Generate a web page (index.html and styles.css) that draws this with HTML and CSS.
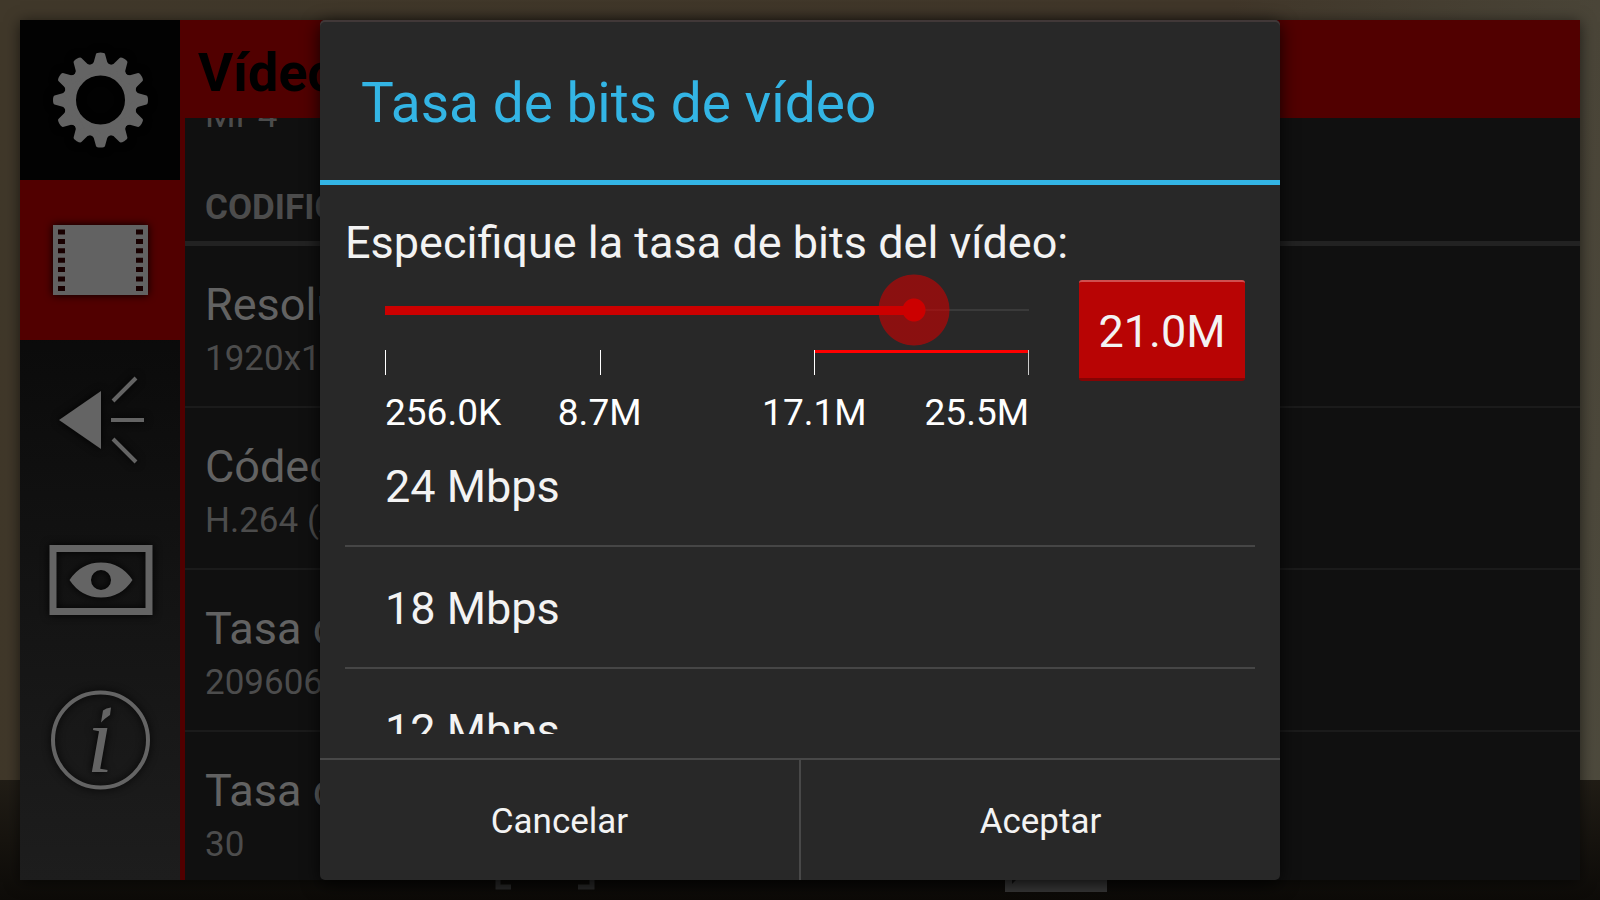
FILE: index.html
```html
<!DOCTYPE html>
<html lang="es">
<head>
  <meta charset="UTF-8">
  <meta name="viewport" content="width=device-width, initial-scale=1">
  <title>Tasa de bits de vídeo</title>
  <link rel="stylesheet" href="styles.css">
</head>
<body>
  <!-- camera controls, mostly hidden by the settings window -->
  <svg class="cam-icon focus" viewBox="0 0 100 40" aria-hidden="true">
    <path d="M3 0V37H16M97 0V37H83" fill="none" stroke="#2a2a2a" stroke-width="5"/>
  </svg>
  <svg class="cam-icon gallery" viewBox="0 0 102 40" aria-hidden="true">
    <rect width="102" height="40" fill="#383838"/>
    <path d="M7 32V28H11Z" fill="#111"/>
  </svg>

  <div class="settings">
    <nav class="tabs">
      <a href="#" class="tab general" aria-label="General">
        <svg viewBox="0 0 160 160">
          <defs>
            <path id="tooth" d="M64 52L67 44Q72 46 73.500 43L76 34Q76.500 32.500 80.500 32.500T85 34L87.500 43Q89 46 94 44L97 52Z"/>
          </defs>
          <circle cx="80.500" cy="80" r="30" fill="none" stroke="#646464" stroke-width="11"/>
          <g id="teeth" fill="#646464"></g>
        </svg>
      </a>
      <a href="#" class="tab video active" aria-label="Vídeo">
        <svg viewBox="0 0 160 160">
          <rect x="33" y="45" width="95" height="70" fill="#626262"/>
          <path d="M41.500 49.500V112M119.500 49.500V112" stroke="#180000" stroke-width="7" stroke-dasharray="5 4.400"/>
        </svg>
      </a>
      <a href="#" class="tab audio" aria-label="Audio">
        <svg viewBox="0 0 160 160">
          <path d="M39 80L81 51V109Z" fill="#646464"/>
          <path d="M93 61L116 38M91 80H124M93 99L116 122" stroke="#646464" stroke-width="4"/>
        </svg>
      </a>
      <a href="#" class="tab preview" aria-label="Vista previa">
        <svg viewBox="0 0 160 160">
          <rect x="33" y="48.500" width="96" height="63" fill="none" stroke="#646464" stroke-width="7"/>
          <path fill-rule="evenodd" fill="#646464" d="M49.500 80Q61 62.500 81 62.500T112.500 80Q101 97.500 81 97.500T49.500 80ZM71 80a10 10 0 1 0 20 0a10 10 0 1 0 -20 0Z"/>
        </svg>
      </a>
      <a href="#" class="tab info" aria-label="Información">
        <svg viewBox="0 0 160 160">
          <circle cx="80.500" cy="80" r="47.500" fill="none" stroke="#646464" stroke-width="4"/>
          <text x="80" y="112" class="info-letter">ı</text>
          <path d="M91 47.500L90 55Q84 59 81 62.500L83 50.500Q86 48 91 47.500Z" fill="#646464"/>
        </svg>
      </a>
    </nav>

    <main class="panel">
      <header class="panel-header">
        <h1>Vídeo</h1>
      </header>
      <div class="panel-body">
        <ul class="prefs">
          <li class="pref">
            <span class="pref-title">Contenedor</span>
            <span class="pref-value">MP4</span>
          </li>
          <li class="section">CODIFICACIÓN</li>
          <li class="pref">
            <span class="pref-title">Resolución</span>
            <span class="pref-value">1920x1080</span>
          </li>
          <li class="pref">
            <span class="pref-title">Códec de vídeo</span>
            <span class="pref-value">H.264 (AVC)</span>
          </li>
          <li class="pref">
            <span class="pref-title">Tasa de bits</span>
            <span class="pref-value">20960645</span>
          </li>
          <li class="pref">
            <span class="pref-title">Tasa de fotogramas</span>
            <span class="pref-value">30</span>
          </li>
        </ul>
      </div>
    </main>
  </div>

  <div class="dialog" role="dialog" aria-labelledby="dialogTitle">
    <h2 id="dialogTitle">Tasa de bits de vídeo</h2>
    <div class="dialog-body">
      <label class="prompt" for="bitrate">Especifique la tasa de bits del vídeo:</label>
      <div class="bitrate">
        <div class="slider">
          <input type="range" id="bitrate" min="256" max="25500" value="21000" style="--fill: 0.8217">
          <div class="ticks">
            <span></span><span></span><span class="high"></span>
          </div>
          <div class="tick-labels">
            <span>256.0K</span>
            <span>8.7M</span>
            <span>17.1M</span>
            <span>25.5M</span>
          </div>
        </div>
        <button type="button" class="value-button">21.0M</button>
      </div>
      <ul class="presets">
        <li>24 Mbps</li>
        <li>18 Mbps</li>
        <li>12 Mbps</li>
      </ul>
    </div>
    <div class="dialog-buttons">
      <button type="button">Cancelar</button>
      <button type="button">Aceptar</button>
    </div>
  </div>

  <script>
    // twelve teeth around the gear
    var teeth = document.getElementById('teeth');
    for (var i = 0; i < 12; i++) {
      var use = document.createElementNS('http://www.w3.org/2000/svg', 'use');
      use.setAttribute('href', '#tooth');
      use.setAttribute('transform', 'rotate(' + i * 30 + ' 80.5 80)');
      teeth.appendChild(use);
    }

    var bitrate = document.getElementById('bitrate');
    bitrate.addEventListener('input', function() {
      bitrate.style.setProperty('--fill', (bitrate.value - 256) / 25244);
      document.querySelector('.value-button').textContent = (bitrate.value / 1000).toFixed(1) + 'M';
    });
  </script>
</body>
</html>
```
FILE: styles.css
```css
* {
  box-sizing: border-box;
}
body {
  font-family: Roboto, sans-serif;
  margin: 0;
  padding: 20px;
  height: 100vh;
  overflow: hidden;
  position: relative;
  background:
    linear-gradient(#211d16, #0d0b08) bottom / 100% 120px no-repeat,
    linear-gradient(100deg, #40382a, #41372a 70%, #4e4b3e);
}
h1, h2, ul {
  margin: 0;
  padding: 0;
  list-style: none;
}
button {
  font-family: inherit;
  color: #f3f3f3;
  border: none;
  padding: 0;
  cursor: pointer;
}

/* camera controls */
.cam-icon {
  position: absolute;
  height: 40px;
}
.focus {
  left: 495px;
  bottom: 10px;
  width: 100px;
}
.gallery {
  left: 1005px;
  bottom: 8px;
  width: 102px;
}

/* settings window */
.settings {
  display: flex;
  height: 100%;
  background: #101010;
  box-shadow: 0 2px 14px rgba(0,0,0,0.6);
}
.tabs {
  width: 160px;
  overflow: hidden;
  background: linear-gradient(#000, #1d1d1d);
}
.tab {
  display: block;
  height: 160px;
}
.tab svg {
  display: block;
  filter: drop-shadow(0 0 4px #000);
}
.tab.active {
  background: #510000;
}
.tab.general {
  background: #020202;
}
.info-letter {
  font: italic 96px "Liberation Serif", serif;
  fill: #646464;
  text-anchor: middle;
}
.panel {
  flex: 1;
  display: flex;
  flex-direction: column;
  min-width: 0;
}
.panel-header {
  display: flex;
  align-items: center;
  height: 98px;
  padding: 6px 18px 0;
  background: #510000;
}
.panel-header h1 {
  font-size: 54px;
  color: #000;
}
.panel-body {
  flex: 1;
  overflow: hidden;
  border-left: 5px solid #510000;
}
/* list is scrolled past the first entry */
.prefs {
  margin-top: -115px;
}
.pref {
  height: 162px;
  padding: 30px 20px 0;
  border-bottom: 2px solid #1b1b1b;
}
.pref-title, .pref-value {
  display: block;
}
.pref-title {
  font-size: 45px;
  line-height: 58px;
  color: #626262;
}
.pref-value {
  font-size: 35px;
  line-height: 50px;
  color: #4c4c4c;
}
.pref:first-child {
  border-bottom: none;
}
.section {
  height: 81px;
  padding: 18px 20px 0;
  font-size: 35px;
  font-weight: bold;
  line-height: 50px;
  color: #4c4c4c;
  border-bottom: 5px solid #222;
}

/* dialog */
.dialog {
  position: absolute;
  top: 20px;
  bottom: 20px;
  left: 20%;
  width: 60%;
  display: flex;
  flex-direction: column;
  overflow: hidden;
  background: #282828;
  color: #f3f3f3;
  border-radius: 5px;
  box-shadow: 0 4px 18px rgba(0,0,0,0.8), inset 0 2px #413838;
}
.dialog h2 {
  height: 165px;
  padding-left: 41px;
  font-size: 55px;
  font-weight: normal;
  line-height: 166px;
  color: #33b5e5;
  border-bottom: 5px solid #33b5e5;
}
.dialog-body {
  flex: 1;
  min-height: 0;
  margin-bottom: 24px;
  padding: 31px 25px 0;
  overflow: hidden;
}
.prompt {
  display: block;
  margin-bottom: 5px;
  font-size: 45px;
  line-height: 53px;
}
.bitrate {
  display: flex;
  align-items: flex-start;
  gap: 50px;
  padding: 0 10px 0 40px;
}
.slider {
  flex: 1;
}
/* the thumb overhangs both ends of the track by half its width */
input[type="range"] {
  -webkit-appearance: none;
  appearance: none;
  display: block;
  width: calc(100% + 72px);
  height: 72px;
  margin: 0 -36px 4px;
  background:
    linear-gradient(#c00, #c00) 36px center / calc((100% - 72px) * var(--fill)) 9px no-repeat,
    linear-gradient(#3a3a3a, #3a3a3a) 36px center / calc(100% - 72px) 2px no-repeat;
}
input[type="range"]::-webkit-slider-thumb {
  -webkit-appearance: none;
  width: 72px;
  height: 72px;
  border-radius: 50%;
  background: radial-gradient(circle, #c00 11px, rgba(204,0,0,0.6) 12px, rgba(204,0,0,0.6) 35px, transparent 36px);
}
.ticks {
  display: grid;
  grid-template-columns: repeat(3, 1fr);
  height: 25px;
}
.ticks span {
  border-left: 1px solid #fff;
}
.ticks .high {
  border-right: 1px solid #ccc;
  background: linear-gradient(#f00, #f00) top / 100% 3px no-repeat;
}
.tick-labels {
  display: grid;
  grid-template-columns: repeat(6, minmax(0, 1fr));
  height: 35px;
  margin-top: 15px;
  font-size: 37px;
  line-height: 46px;
  color: #fff;
  white-space: nowrap;
}
.tick-labels span {
  grid-column: span 2;
  justify-self: center;
}
.tick-labels span:first-child {
  grid-column: span 1;
  justify-self: start;
}
.tick-labels span:last-child {
  grid-column: span 1;
  justify-self: end;
}
.value-button {
  width: 166px;
  height: 101px;
  margin-top: 6px;
  padding-top: 3px;
  font-size: 45px;
  background: #b80404;
  border-top: 2px solid #d04f4f;
  border-bottom: 3px solid #850404;
  border-radius: 3px;
}
.presets li {
  height: 122px;
  padding: 35px 40px 0;
  font-size: 45px;
  line-height: 53px;
  border-bottom: 2px solid #464646;
}
.dialog-buttons {
  display: flex;
  height: 122px;
  border-top: 2px solid #484848;
}
.dialog-buttons button {
  flex: 1;
  padding-top: 2px;
  font-size: 35px;
  background: none;
}
.dialog-buttons button + button {
  border-left: 2px solid #484848;
}
```
